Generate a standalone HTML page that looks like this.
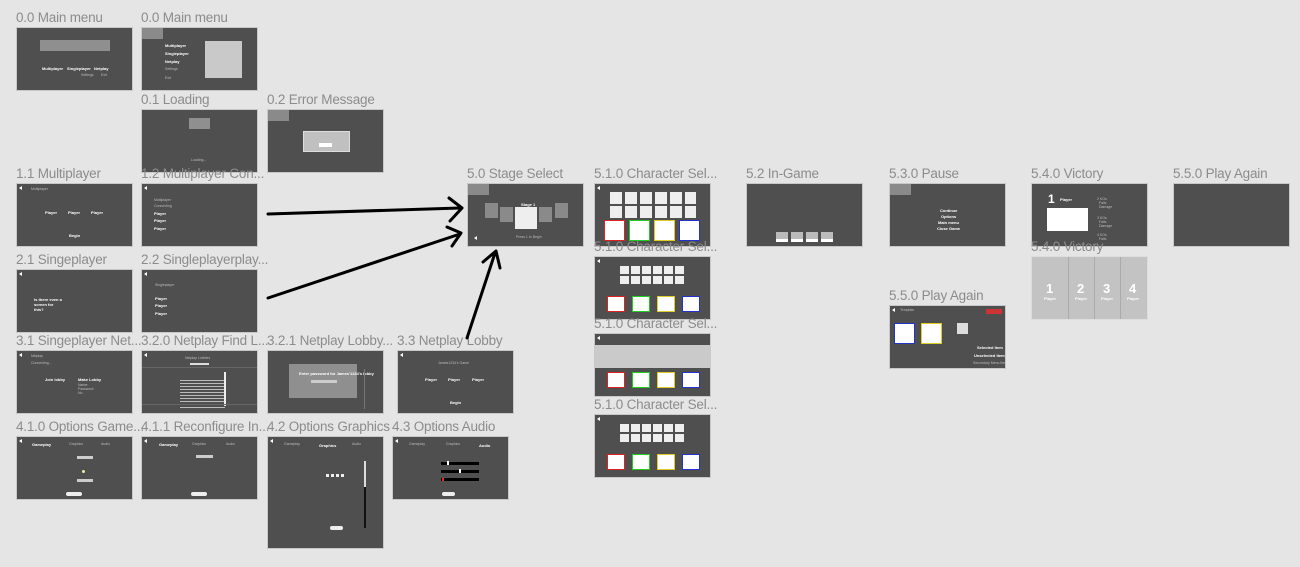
<!DOCTYPE html>
<html><head><meta charset="utf-8"><style>
*{margin:0;padding:0;box-sizing:border-box}
body{width:1300px;height:567px;background:#e5e5e5;position:relative;overflow:hidden;font-family:"Liberation Sans",sans-serif}
.l{position:absolute;font-size:13.5px;color:#8c8c8c;white-space:nowrap;line-height:14px;letter-spacing:-0.2px}
.c{position:absolute;width:117px;height:64px;background:#4f4f4f;border:1px solid #c8c8c8;overflow:hidden}
.c *{position:absolute}
.t{color:#fff;font-size:4px;font-weight:bold;white-space:nowrap}
.g{color:#bbb;font-size:3.5px;white-space:nowrap}
.logo{left:0;top:0;width:21px;height:11px;background:#8a8a8a}
.b{left:2px;top:2px;width:0;height:0;border:2px solid transparent;border-right:3px solid #fff;border-left:0}
</style></head><body>

<div class="l" style="left:16px;top:11px">0.0 Main menu</div>
<div class="c" style="left:16px;top:27px"><div style="left:23px;top:12px;width:70px;height:11px;background:#8f8f8f"></div><span class="t" style="left:25px;top:38px">Multiplayer</span><span class="t" style="left:50px;top:38px">Singleplayer</span><span class="t" style="left:77px;top:38px">Netplay</span><span class="g" style="left:64px;top:45px">Settings</span><span class="g" style="left:84px;top:45px">Exit</span></div>

<div class="l" style="left:141px;top:11px">0.0 Main menu</div>
<div class="c" style="left:141px;top:27px"><div class="logo"></div><span class="t" style="left:23px;top:15px">Multiplayer</span><span class="t" style="left:23px;top:23px">Singleplayer</span><span class="t" style="left:23px;top:31px">Netplay</span><span class="g" style="left:23px;top:39px">Settings</span><span class="g" style="left:23px;top:48px">Exit</span><div style="left:63px;top:13px;width:37px;height:37px;background:#c9c9c9"></div></div>

<div class="l" style="left:141px;top:93px">0.1 Loading</div>
<div class="c" style="left:141px;top:109px"><div style="left:47px;top:8px;width:21px;height:11px;background:#8f8f8f"></div><span class="g" style="left:49px;top:48px">Loading...</span></div>

<div class="l" style="left:267px;top:93px">0.2 Error Message</div>
<div class="c" style="left:267px;top:109px"><div class="logo"></div><div style="left:35px;top:21px;width:47px;height:21px;background:#c0c0c0;border:1px solid #ddd"></div><div style="left:51px;top:33px;width:13px;height:4px;background:#fff"></div></div>

<div class="l" style="left:16px;top:167px">1.1 Multiplayer</div>
<div class="c" style="left:16px;top:183px"><div class="b"></div><span class="g" style="left:14px;top:3px">Multiplayer</span><span class="t" style="left:28px;top:26px">Player</span><span class="t" style="left:51px;top:26px">Player</span><span class="t" style="left:74px;top:26px">Player</span><span class="t" style="left:52px;top:49px">Begin</span></div>

<div class="l" style="left:141px;top:167px">1.2 Multiplayer Con...</div>
<div class="c" style="left:141px;top:183px"><div class="b"></div><span class="g" style="left:12px;top:14px">Multiplayer</span><span class="g" style="left:12px;top:20px">Connecting</span><span class="t" style="left:12px;top:27px">Player</span><span class="t" style="left:12px;top:34px">Player</span><span class="t" style="left:12px;top:42px">Player</span></div>

<div class="l" style="left:16px;top:253px">2.1 Singeplayer</div>
<div class="c" style="left:16px;top:269px"><div class="b"></div><span class="t" style="left:17px;top:27px;line-height:5px">Is there even a<br>screen for<br>this?</span></div>

<div class="l" style="left:141px;top:253px">2.2 Singleplayerplay...</div>
<div class="c" style="left:141px;top:269px"><div class="b"></div><span class="g" style="left:13px;top:13px">Singleplayer</span><span class="t" style="left:13px;top:26px">Player</span><span class="t" style="left:13px;top:33px">Player</span><span class="t" style="left:13px;top:41px">Player</span></div>

<div class="l" style="left:16px;top:334px">3.1 Singeplayer Net...</div>
<div class="c" style="left:16px;top:350px"><div class="b"></div><span class="g" style="left:14px;top:3px">Netplay</span><span class="g" style="left:14px;top:10px">Connecting...</span><span class="t" style="left:28px;top:26px">Join lobby</span><span class="t" style="left:61px;top:26px">Make Lobby</span><span class="g" style="left:61px;top:32px">Name:<br>Password:<br>No.</span></div>

<div class="l" style="left:141px;top:334px">3.2.0 Netplay Find L...</div>
<div class="c" style="left:141px;top:350px"><div class="b"></div><span class="g" style="left:43px;top:5px">Netplay Lobbies</span><div style="left:48px;top:12px;width:19px;height:2px;background:#ddd"></div><div style="left:0;top:16px;width:117px;height:1px;background:#666"></div><div style="left:38px;top:27px;width:45px;height:30px;background:repeating-linear-gradient(#4f4f4f 0 2px,#bbb 2px 3px)"></div><div style="left:82px;top:21px;width:2px;height:34px;background:#eee"></div><div style="left:0;top:53px;width:117px;height:1px;background:#666"></div></div>

<div class="l" style="left:267px;top:334px">3.2.1 Netplay Lobby...</div>
<div class="c" style="left:267px;top:350px"><div style="left:21px;top:13px;width:68px;height:34px;background:#8f8f8f"></div><span class="t" style="left:31px;top:20px">Enter password for James'1234's lobby</span><div style="left:43px;top:29px;width:26px;height:3px;background:#ccc"></div><div style="left:96px;top:18px;width:1px;height:40px;background:#777"></div></div>

<div class="l" style="left:397px;top:334px">3.3 Netplay Lobby</div>
<div class="c" style="left:397px;top:350px"><div class="b"></div><span class="g" style="left:40px;top:10px">James1234's Game</span><span class="t" style="left:27px;top:26px">Player</span><span class="t" style="left:50px;top:26px">Player</span><span class="t" style="left:74px;top:26px">Player</span><span class="t" style="left:52px;top:49px">Begin</span></div>

<div class="l" style="left:16px;top:420px">4.1.0 Options Game...</div>
<div class="c" style="left:16px;top:436px"><div class="b"></div><span class="t" style="left:15px;top:5px">Gameplay</span><span class="g" style="left:52px;top:5px">Graphics</span><span class="g" style="left:84px;top:5px">Audio</span><div style="left:60px;top:19px;width:16px;height:3px;background:#ccc"></div><div style="left:65px;top:33px;width:3px;height:3px;border-radius:50%;background:#ee9"></div><div style="left:60px;top:42px;width:16px;height:3px;background:#ccc"></div><div style="left:49px;top:55px;width:16px;height:4px;background:#eee;border-radius:2px"></div></div>

<div class="l" style="left:141px;top:420px">4.1.1 Reconfigure In...</div>
<div class="c" style="left:141px;top:436px"><div class="b"></div><span class="t" style="left:17px;top:5px">Gameplay</span><span class="g" style="left:50px;top:5px">Graphics</span><span class="g" style="left:84px;top:5px">Audio</span><div style="left:54px;top:18px;width:17px;height:3px;background:#ccc"></div><div style="left:49px;top:55px;width:16px;height:4px;background:#eee;border-radius:2px"></div></div>

<div class="l" style="left:267px;top:420px">4.2 Options Graphics</div>
<div class="c" style="left:267px;top:436px;height:113px"><div class="b"></div><span class="g" style="left:16px;top:5px">Gameplay</span><span class="t" style="left:51px;top:6px">Graphics</span><span class="g" style="left:84px;top:5px">Audio</span><div style="left:58px;top:37px;width:20px;height:3px;background:repeating-linear-gradient(90deg,#eee 0 3px,transparent 3px 5px)"></div><div style="left:96px;top:24px;width:2px;height:67px;background:#111"></div><div style="left:96px;top:24px;width:2px;height:26px;background:#ddd"></div><div style="left:62px;top:89px;width:13px;height:4px;background:#eee;border-radius:2px"></div></div>

<div class="l" style="left:392px;top:420px">4.3 Options Audio</div>
<div class="c" style="left:392px;top:436px"><div class="b"></div><span class="g" style="left:16px;top:5px">Gameplay</span><span class="g" style="left:53px;top:5px">Graphics</span><span class="t" style="left:86px;top:6px">Audio</span><div style="left:48px;top:25px;width:38px;height:3px;background:#000"></div><div style="left:48px;top:33px;width:38px;height:3px;background:#000"></div><div style="left:48px;top:41px;width:38px;height:3px;background:#000"></div><div style="left:54px;top:24px;width:2px;height:4px;background:#fff"></div><div style="left:66px;top:32px;width:2px;height:4px;background:#fff"></div><div style="left:49px;top:41px;width:2px;height:3px;background:#e22"></div><div style="left:49px;top:55px;width:13px;height:4px;background:#eee;border-radius:2px"></div></div>

<div class="l" style="left:467px;top:167px">5.0 Stage Select</div>
<div class="c" style="left:467px;top:183px"><div class="logo"></div><div style="left:17px;top:19px;width:13px;height:15px;background:#8a8a8a"></div><div style="left:32px;top:23px;width:13px;height:15px;background:#8a8a8a"></div><div style="left:47px;top:23px;width:22px;height:22px;background:#eee"></div><div style="left:71px;top:23px;width:13px;height:15px;background:#8a8a8a"></div><div style="left:87px;top:19px;width:13px;height:15px;background:#8a8a8a"></div><span class="t" style="left:53px;top:18px">Stage 1</span><span class="g" style="left:48px;top:51px">Press 1 to Begin</span><div class="b" style="top:52px;left:6px"></div></div>

<div class="l" style="left:594px;top:167px">5.1.0 Character Sel...</div>
<div class="c" style="left:594px;top:183px"><div class="b"></div><div style="left:15px;top:8px;width:86px;height:26px;background:repeating-linear-gradient(90deg,#eee 0 12px,transparent 12px 15px)"></div><div style="left:15px;top:20px;width:86px;height:2px;background:#4f4f4f"></div><div style="left:9px;top:36px;width:21px;height:21px;background:#fff;border:1px solid #d22"></div><div style="left:34px;top:36px;width:21px;height:21px;background:#fff;border:1px solid #2c2"></div><div style="left:59px;top:36px;width:21px;height:21px;background:#fff;border:1px solid #dc2"></div><div style="left:84px;top:36px;width:21px;height:21px;background:#fff;border:1px solid #23c"></div></div>

<div class="l" style="left:594px;top:240px">5.1.0 Character Sel...</div>
<div class="c" style="left:594px;top:256px"><div class="b"></div><div style="left:25px;top:9px;width:65px;height:18px;background:repeating-linear-gradient(90deg,#eee 0 9px,transparent 9px 11px)"></div><div style="left:25px;top:17px;width:65px;height:2px;background:#4f4f4f"></div><div style="left:12px;top:39px;width:18px;height:16px;background:#fff;border:1px solid #d22"></div><div style="left:37px;top:39px;width:18px;height:16px;background:#fff;border:1px solid #2c2"></div><div style="left:62px;top:39px;width:18px;height:16px;background:#fff;border:1px solid #dc2"></div><div style="left:87px;top:39px;width:18px;height:16px;background:#fff;border:1px solid #23c"></div></div>

<div class="l" style="left:594px;top:317px">5.1.0 Character Sel...</div>
<div class="c" style="left:594px;top:333px"><div class="b"></div><div style="left:0;top:11px;width:117px;height:23px;background:#cacaca"></div><div style="left:12px;top:38px;width:18px;height:16px;background:#fff;border:1px solid #d22"></div><div style="left:37px;top:38px;width:18px;height:16px;background:#fff;border:1px solid #2c2"></div><div style="left:62px;top:38px;width:18px;height:16px;background:#fff;border:1px solid #dc2"></div><div style="left:87px;top:38px;width:18px;height:16px;background:#fff;border:1px solid #23c"></div></div>

<div class="l" style="left:594px;top:398px">5.1.0 Character Sel...</div>
<div class="c" style="left:594px;top:414px"><div class="b"></div><div style="left:25px;top:9px;width:65px;height:18px;background:repeating-linear-gradient(90deg,#eee 0 9px,transparent 9px 11px)"></div><div style="left:25px;top:17px;width:65px;height:2px;background:#4f4f4f"></div><div style="left:12px;top:39px;width:18px;height:16px;background:#fff;border:1px solid #d22"></div><div style="left:37px;top:39px;width:18px;height:16px;background:#fff;border:1px solid #2c2"></div><div style="left:62px;top:39px;width:18px;height:16px;background:#fff;border:1px solid #dc2"></div><div style="left:87px;top:39px;width:18px;height:16px;background:#fff;border:1px solid #23c"></div></div>

<div class="l" style="left:746px;top:167px">5.2 In-Game</div>
<div class="c" style="left:746px;top:183px"><div style="left:29px;top:48px;width:60px;height:10px;background:repeating-linear-gradient(90deg,#bbb 0 12px,transparent 12px 15px)"></div><div style="left:29px;top:55px;width:60px;height:3px;background:repeating-linear-gradient(90deg,#fff 0 12px,transparent 12px 15px)"></div></div>

<div class="l" style="left:889px;top:167px">5.3.0 Pause</div>
<div class="c" style="left:889px;top:183px"><div class="logo"></div><span class="t" style="left:50px;top:24px">Continue</span><span class="t" style="left:51px;top:30px">Options</span><span class="t" style="left:48px;top:36px">Main menu</span><span class="t" style="left:47px;top:42px">Close Game</span></div>

<div class="l" style="left:1031px;top:167px">5.4.0 Victory</div>
<div class="c" style="left:1031px;top:183px"><span class="t" style="left:16px;top:8px;font-size:12px">1</span><span class="t" style="left:28px;top:13px">Player</span><div style="left:15px;top:24px;width:41px;height:23px;background:#fff"></div><span class="g" style="left:65px;top:13px;line-height:4px">2 KOs<br>&nbsp;&nbsp;Falls<br>&nbsp;&nbsp;Damage</span><span class="g" style="left:65px;top:32px;line-height:4px">3 KOs<br>&nbsp;&nbsp;Falls<br>&nbsp;&nbsp;Damage</span><span class="g" style="left:65px;top:49px;line-height:4px">4 KOs<br>&nbsp;&nbsp;Falls</span></div>

<div class="l" style="left:1031px;top:240px">5.4.0 Victory</div>
<div class="c" style="left:1031px;top:256px;background:#c3c3c3;border-color:#ddd"><div style="left:36px;top:0;width:1px;height:64px;background:#aaa"></div><div style="left:62px;top:0;width:1px;height:64px;background:#aaa"></div><div style="left:88px;top:0;width:1px;height:64px;background:#aaa"></div><span class="t" style="left:14px;top:24px;font-size:13px">1</span><span class="t" style="left:45px;top:24px;font-size:13px">2</span><span class="t" style="left:71px;top:24px;font-size:13px">3</span><span class="t" style="left:97px;top:24px;font-size:13px">4</span><span class="t" style="left:12px;top:39px">Player</span><span class="t" style="left:43px;top:39px">Player</span><span class="t" style="left:69px;top:39px">Player</span><span class="t" style="left:95px;top:39px">Player</span></div>

<div class="l" style="left:1173px;top:167px">5.5.0 Play Again</div>
<div class="c" style="left:1173px;top:183px"></div>

<div class="l" style="left:889px;top:289px">5.5.0 Play Again</div>
<div class="c" style="left:889px;top:305px"><div class="b"></div><span class="g" style="left:10px;top:2px">Template</span><div style="left:96px;top:3px;width:16px;height:5px;background:#c33"></div><div style="left:4px;top:17px;width:21px;height:21px;background:#fff;border:1px solid #23c"></div><div style="left:31px;top:17px;width:21px;height:21px;background:#fff;border:1px solid #dc2"></div><div style="left:67px;top:17px;width:11px;height:11px;background:#ddd"></div><span class="t" style="left:87px;top:39px">Selected Item</span><span class="t" style="left:84px;top:47px">Unselected Item</span><span class="g" style="left:83px;top:55px">Secondary Menu Item</span></div>

<svg style="position:absolute;left:0;top:0" width="1300" height="567"><g stroke="#000" stroke-width="3" fill="none" stroke-linecap="round" stroke-linejoin="round"><path d="M268 214L460 208M449 198L462 208L450 221"/><path d="M268 298L460 234M447 227L461 233L452 246"/><path d="M467 338L495 253M483 262L496 251L500 268"/></g></svg>
</body></html>
